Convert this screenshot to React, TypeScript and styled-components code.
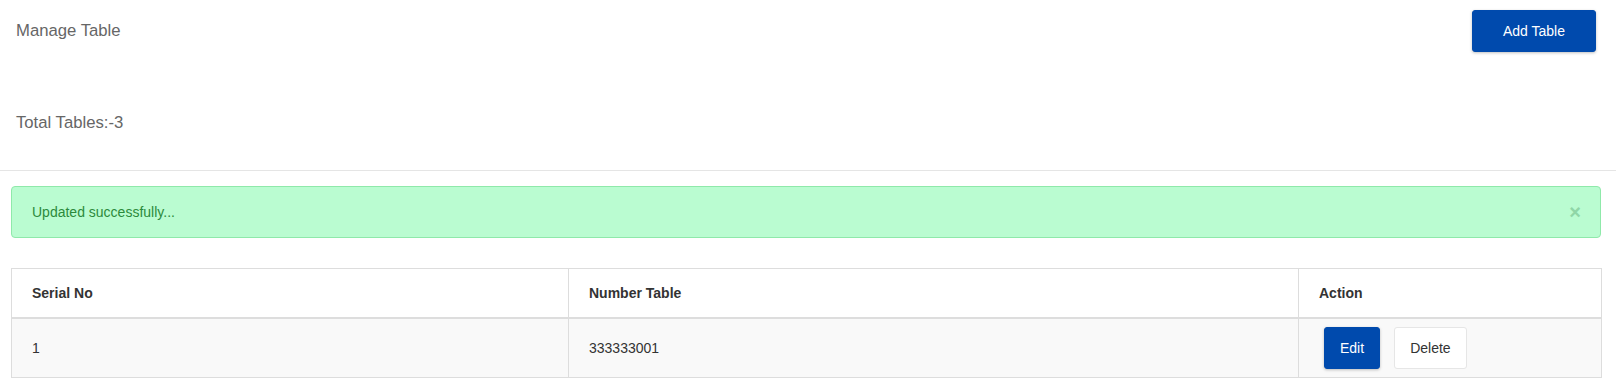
import React from "react";
import styled, { createGlobalStyle } from "styled-components";

const Global = createGlobalStyle`
  html, body { margin: 0; padding: 0; background: #fff; }
  body { font-family: "Liberation Sans", Arial, sans-serif; font-size: 14px; color: #333; }
  * { box-sizing: border-box; }
`;

const Page = styled.div`
  width: 1616px;
`;

const TopBar = styled.div`
  display: flex;
  justify-content: space-between;
  align-items: center;
  padding: 10px 20px 0 16px;
`;

const Title = styled.h1`
  margin: 0;
  font-size: 16.7px;
  font-weight: normal;
  color: #666;
  line-height: 22px;
`;

const Button = styled.button<{ $variant?: "primary" | "default"; $px?: number }>`
  height: 42px;
  padding: 0 ${(p) => p.$px ?? 15}px;
  font-family: "Liberation Sans", Arial, sans-serif;
  font-size: 14px;
  border-radius: 3px;
  cursor: pointer;
  line-height: 1;
  ${(p) =>
    p.$variant === "primary"
      ? `background: #004aad; color: #fff; border: 1px solid #004aad; box-shadow: 0 1px 3px rgba(0,0,0,0.25);`
      : `background: #fff; color: #333; border: 1px solid #e6e6e6; box-shadow: none;`}
`;

const Summary = styled.div`
  margin-top: 60px;
  padding: 0 16px 36px;
  font-size: 16.7px;
  line-height: 22px;
  color: #666;
  border-bottom: 1px solid #e5e5e5;
`;

const Alert = styled.div`
  margin: 15px 15px 0 11px;
  height: 52px;
  padding: 0 20px;
  display: flex;
  align-items: center;
  justify-content: space-between;
  background: #bafcd1;
  border: 1px solid #8fe9aa;
  border-radius: 4px;
  color: #2c8a3c;
  font-size: 14px;
`;

const Close = styled.span`
  font-size: 20px;
  font-weight: bold;
  color: #8fd6a7;
  line-height: 1;
  margin-right: -1px;
`;

const Table = styled.table`
  margin: 30px 15px 0 11px;
  width: 1590px;
  border-collapse: collapse;
  table-layout: fixed;
  border: 1px solid #ddd;
`;

const Th = styled.th`
  text-align: left;
  font-weight: bold;
  color: #333;
  padding: 14px 20px;
  line-height: 20px;
  border: 1px solid #ddd;
  border-bottom: 2px solid #ddd;
`;

const Tr = styled.tr<{ $striped?: boolean }>`
  background: ${(p) => (p.$striped ? "#f9f9f9" : "#fff")};
`;

const Td = styled.td`
  padding: 8px 20px;
  line-height: 20px;
  border: 1px solid #ddd;
  color: #333;
  height: 58px;
`;

const Actions = styled.div`
  display: flex;
  gap: 14px;
  margin-left: 5px;
`;

const rows = [{ serial: 1, number: "333333001" }];

export default function App() {
  return (
    <Page>
      <Global />
      <TopBar>
        <Title>Manage Table</Title>
        <Button $variant="primary" $px={30}>Add Table</Button>
      </TopBar>
      <Summary>Total Tables:-3</Summary>
      <Alert>
        <span>Updated successfully...</span>
        <Close>×</Close>
      </Alert>
      <Table>
        <colgroup>
          <col style={{ width: "557px" }} />
          <col style={{ width: "730px" }} />
          <col style={{ width: "303px" }} />
        </colgroup>
        <thead>
          <tr>
            <Th>Serial No</Th>
            <Th>Number Table</Th>
            <Th>Action</Th>
          </tr>
        </thead>
        <tbody>
          {rows.map((r, i) => (
            <Tr key={r.serial} $striped={i % 2 === 0}>
              <Td>{r.serial}</Td>
              <Td>{r.number}</Td>
              <Td>
                <Actions>
                  <Button $variant="primary" $px={15}>Edit</Button>
                  <Button $px={15}>Delete</Button>
                </Actions>
              </Td>
            </Tr>
          ))}
        </tbody>
      </Table>
    </Page>
  );
}
